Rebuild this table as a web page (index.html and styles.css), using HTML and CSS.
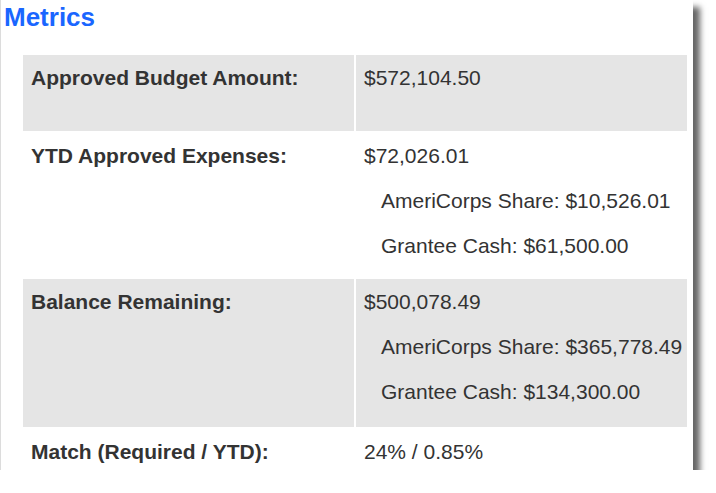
FILE: index.html
```html
<!DOCTYPE html>
<html>
<head>
<meta charset="utf-8">
<link rel="stylesheet" href="styles.css">
</head>
<body>
<div class="panel">
  <h2 class="title">Metrics</h2>
  <div class="metrics">
    <div class="cell label shaded">Approved Budget Amount:</div>
    <div class="cell value shaded"><div class="line">$572,104.50</div></div>

    <div class="cell label">YTD Approved Expenses:</div>
    <div class="cell value">
      <div class="line">$72,026.01</div>
      <div class="line sub">AmeriCorps Share: $10,526.01</div>
      <div class="line sub">Grantee Cash: $61,500.00</div>
    </div>

    <div class="cell label shaded">Balance Remaining:</div>
    <div class="cell value shaded">
      <div class="line">$500,078.49</div>
      <div class="line sub">AmeriCorps Share: $365,778.49</div>
      <div class="line sub">Grantee Cash: $134,300.00</div>
    </div>

    <div class="cell label">Match (Required / YTD):</div>
    <div class="cell value"><div class="line">24% / 0.85%</div></div>
  </div>
</div>
</body>
</html>
```
FILE: styles.css
```css
html, body {
  margin: 0;
  padding: 0;
  background: #ffffff;
}
body {
  font-family: "Liberation Sans", Arial, sans-serif;
  color: #333333;
}
.panel {
  width: 692px;
  height: 470px;
  background: #ffffff;
  border-left: 1px solid #dcdcdc;
  box-shadow: 7px 7px 6px rgba(0, 0, 0, 0.6);
  overflow: hidden;
}
.title {
  margin: 0;
  padding: 2px 0 0 3px;
  font-size: 26px;
  line-height: 30px;
  font-weight: bold;
  color: #1a66ff;
}
.metrics {
  display: grid;
  grid-template-columns: 331px 331px;
  grid-template-rows: 76px 144px 148px 60px;
  gap: 2px;
  margin: 23px 0 0 22px;
}
.cell {
  padding: 0 8px;
  font-size: 21px;
  line-height: 45px;
}
.shaded {
  background: #e5e5e5;
}
.label {
  font-weight: bold;
}
.line {
  white-space: nowrap;
}
.sub {
  padding-left: 17px;
}
```
